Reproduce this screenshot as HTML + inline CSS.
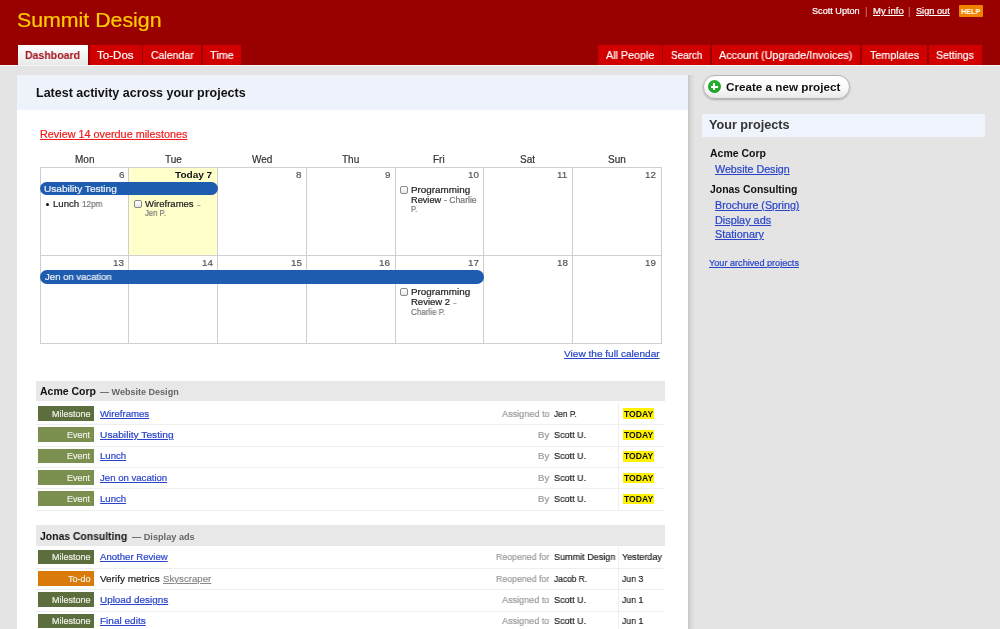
<!DOCTYPE html>
<html><head><meta charset="utf-8"><title>Summit Design - Dashboard</title>
<style>
html,body{margin:0;padding:0;}
body{width:1000px;height:629px;overflow:hidden;position:relative;background:#e4e4e4;font-family:"Liberation Sans",sans-serif;}
.r{position:absolute;}
.t{position:absolute;white-space:pre;will-change:transform;}
.n{-webkit-text-stroke:0.2px currentColor;}
</style></head><body>
<div class=r style="left:0;top:0;width:1000px;height:65px;background:#990000"></div>
<div class=r style="left:0;top:65px;width:1000px;height:1px;background:#f4f6f6"></div>
<div class=r style="left:958.5px;top:5px;width:24px;height:12px;background:#ee8400;border-radius:1px"></div>
<div class=r style="left:17.9px;top:45px;width:70.19999999999999px;height:20px;background:linear-gradient(#ffffff,#e9e9e9)"></div>
<div class=r style="left:90px;top:45px;width:51.5px;height:20px;background:#d10000"></div>
<div class=r style="left:143px;top:45px;width:58px;height:20px;background:#d10000"></div>
<div class=r style="left:202.7px;top:45px;width:38.30000000000001px;height:20px;background:#d10000"></div>
<div class=r style="left:598.4px;top:45px;width:63.200000000000045px;height:20px;background:#d10000"></div>
<div class=r style="left:663px;top:45px;width:47px;height:20px;background:#d10000"></div>
<div class=r style="left:712px;top:45px;width:148.39999999999998px;height:20px;background:#d10000"></div>
<div class=r style="left:862px;top:45px;width:65.39999999999998px;height:20px;background:#d10000"></div>
<div class=r style="left:929px;top:45px;width:53px;height:20px;background:#d10000"></div>
<div class=r style="left:17px;top:75px;width:671px;height:560px;background:#fff"></div>
<div class=r style="left:688px;top:75px;width:8px;height:560px;background:linear-gradient(90deg,#c6c6c6,#dadada 40%,#e5e5e5)"></div>
<div class=r style="left:17px;top:75px;width:671px;height:34.5px;background:#eef3fb"></div>
<div class=r style="left:129px;top:167px;width:88px;height:88px;background:#ffffcc"></div>
<div class=r style="left:40px;top:167px;width:1px;height:177px;background:#cfcfcf"></div>
<div class=r style="left:128px;top:167px;width:1px;height:177px;background:#cfcfcf"></div>
<div class=r style="left:217px;top:167px;width:1px;height:177px;background:#cfcfcf"></div>
<div class=r style="left:306px;top:167px;width:1px;height:177px;background:#cfcfcf"></div>
<div class=r style="left:395px;top:167px;width:1px;height:177px;background:#cfcfcf"></div>
<div class=r style="left:483px;top:167px;width:1px;height:177px;background:#cfcfcf"></div>
<div class=r style="left:572px;top:167px;width:1px;height:177px;background:#cfcfcf"></div>
<div class=r style="left:661px;top:167px;width:1px;height:177px;background:#cfcfcf"></div>
<div class=r style="left:40px;top:167px;width:622px;height:1px;background:#cfcfcf"></div>
<div class=r style="left:40px;top:255px;width:622px;height:1px;background:#cfcfcf"></div>
<div class=r style="left:40px;top:343px;width:622px;height:1px;background:#cfcfcf"></div>
<div class=r style="left:40px;top:182px;width:177.5px;height:13.2px;background:#1d5cae;border-radius:7px"></div>
<div class=r style="left:40px;top:270.4px;width:443.5px;height:13.2px;background:#1d5cae;border-radius:7px"></div>
<div class=r style="left:45.7px;top:202.8px;width:3.2px;height:3.2px;background:#111;border-radius:50%"></div>
<div class=r style="left:133.5px;top:199.5px;width:6px;height:6px;border:1px solid #8a8a8a;border-radius:2px;background:linear-gradient(#fff,#e6e6e6)"></div>
<div class=r style="left:400px;top:185.5px;width:6px;height:6px;border:1px solid #8a8a8a;border-radius:2px;background:linear-gradient(#fff,#e6e6e6)"></div>
<div class=r style="left:400px;top:288px;width:6px;height:6px;border:1px solid #8a8a8a;border-radius:2px;background:linear-gradient(#fff,#e6e6e6)"></div>
<div class=r style="left:36px;top:381px;width:629px;height:20.4px;background:#e8e8e8"></div>
<div class=r style="left:38px;top:406.0px;width:56px;height:14.6px;background:#5d6e3e"></div>
<div class=r style="left:618px;top:403.0px;width:1px;height:21.4px;background:#efefef"></div>
<div class=r style="left:36px;top:424.2px;width:628px;height:1px;background:#eeeeee"></div>
<div class=r style="left:623px;top:408.4px;width:31.4px;height:10.6px;background:#fff200"></div>
<div class=r style="left:38px;top:427.37px;width:56px;height:14.6px;background:#7b8f4f"></div>
<div class=r style="left:618px;top:424.37px;width:1px;height:21.4px;background:#efefef"></div>
<div class=r style="left:36px;top:445.57px;width:628px;height:1px;background:#eeeeee"></div>
<div class=r style="left:623px;top:429.77px;width:31.4px;height:10.6px;background:#fff200"></div>
<div class=r style="left:38px;top:448.74px;width:56px;height:14.6px;background:#7b8f4f"></div>
<div class=r style="left:618px;top:445.74px;width:1px;height:21.4px;background:#efefef"></div>
<div class=r style="left:36px;top:466.94px;width:628px;height:1px;background:#eeeeee"></div>
<div class=r style="left:623px;top:451.14px;width:31.4px;height:10.6px;background:#fff200"></div>
<div class=r style="left:38px;top:470.11px;width:56px;height:14.6px;background:#7b8f4f"></div>
<div class=r style="left:618px;top:467.11px;width:1px;height:21.4px;background:#efefef"></div>
<div class=r style="left:36px;top:488.31px;width:628px;height:1px;background:#eeeeee"></div>
<div class=r style="left:623px;top:472.51px;width:31.4px;height:10.6px;background:#fff200"></div>
<div class=r style="left:38px;top:491.48px;width:56px;height:14.6px;background:#7b8f4f"></div>
<div class=r style="left:618px;top:488.48px;width:1px;height:21.4px;background:#efefef"></div>
<div class=r style="left:36px;top:509.68px;width:628px;height:1px;background:#eeeeee"></div>
<div class=r style="left:623px;top:493.88px;width:31.4px;height:10.6px;background:#fff200"></div>
<div class=r style="left:36px;top:525.2px;width:629px;height:20.4px;background:#e8e8e8"></div>
<div class=r style="left:38px;top:549.6px;width:56px;height:14.6px;background:#5d6e3e"></div>
<div class=r style="left:618px;top:546.6px;width:1px;height:21.4px;background:#efefef"></div>
<div class=r style="left:36px;top:567.8000000000001px;width:628px;height:1px;background:#eeeeee"></div>
<div class=r style="left:38px;top:571.0px;width:56px;height:14.6px;background:#d97a0b"></div>
<div class=r style="left:618px;top:568.0px;width:1px;height:21.4px;background:#efefef"></div>
<div class=r style="left:36px;top:589.2px;width:628px;height:1px;background:#eeeeee"></div>
<div class=r style="left:38px;top:592.4px;width:56px;height:14.6px;background:#5d6e3e"></div>
<div class=r style="left:618px;top:589.4px;width:1px;height:21.4px;background:#efefef"></div>
<div class=r style="left:36px;top:610.6px;width:628px;height:1px;background:#eeeeee"></div>
<div class=r style="left:38px;top:613.8px;width:56px;height:14.6px;background:#5d6e3e"></div>
<div class=r style="left:618px;top:610.8px;width:1px;height:21.4px;background:#efefef"></div>
<div class=r style="left:36px;top:632.0px;width:628px;height:1px;background:#eeeeee"></div>
<div class=r style="left:703px;top:75.2px;width:145.2px;height:21.6px;border:1px solid #b4b4b4;border-radius:12px;background:linear-gradient(#ffffff 0%,#fbfbfb 50%,#e9e9e9 100%);box-shadow:0 1px 2px rgba(0,0,0,0.25)"></div>
<div class=r style="left:707.6px;top:80.3px;width:13.2px;height:13.2px;border-radius:50%;background:radial-gradient(circle at 50% 40%,#22b02c 40%,#0f8c1c)"></div>
<div class=r style="left:710.8px;top:86.1px;width:7px;height:1.7px;background:#fff"></div>
<div class=r style="left:713.45px;top:83.45px;width:1.7px;height:7px;background:#fff"></div>
<div class=r style="left:701.7px;top:113.5px;width:283px;height:23.2px;background:#eef3fc"></div>
<div class='t n' style="left:16.65px;top:11.00px;font-size:19.80px;line-height:19.80px;font-weight:400;color:#ffcc00;transform:scaleX(1.0779);transform-origin:0 0;">Summit Design</div>
<div class='t n' style="left:811.65px;top:7.00px;font-size:8.80px;line-height:8.80px;font-weight:400;color:#fff;transform:scaleX(1.0374);transform-origin:0 0;">Scott Upton</div>
<div class='t n' style="left:865.15px;top:6.50px;font-size:10.00px;line-height:10.00px;font-weight:400;color:#c86464;transform:scaleX(1.0391);transform-origin:0 0;">|</div>
<div class='t n' style="left:872.65px;top:7.00px;font-size:8.80px;line-height:8.80px;font-weight:400;color:#fff;transform:scaleX(1.0823);transform-origin:0 0;text-decoration:underline">My info</div>
<div class='t n' style="left:908.15px;top:6.50px;font-size:10.00px;line-height:10.00px;font-weight:400;color:#c86464;transform:scaleX(1.0391);transform-origin:0 0;">|</div>
<div class='t n' style="left:915.65px;top:7.00px;font-size:8.80px;line-height:8.80px;font-weight:400;color:#fff;transform:scaleX(1.0436);transform-origin:0 0;text-decoration:underline">Sign out</div>
<div class='t' style="left:960.65px;top:7.70px;font-size:8.00px;line-height:8.00px;font-weight:700;color:#fff;transform:scaleX(0.9046);transform-origin:0 0;">HELP</div>
<div class='t' style="left:25.25px;top:49.70px;font-size:11.20px;line-height:11.20px;font-weight:700;color:#a0101c;transform:scaleX(0.9419);transform-origin:0 0;">Dashboard</div>
<div class='t n' style="left:97.25px;top:50.00px;font-size:11.20px;line-height:11.20px;font-weight:400;color:#fff;transform:scaleX(1.0345);transform-origin:0 0;">To-Dos</div>
<div class='t n' style="left:150.65px;top:50.00px;font-size:11.20px;line-height:11.20px;font-weight:400;color:#fff;transform:scaleX(0.9395);transform-origin:0 0;">Calendar</div>
<div class='t n' style="left:209.65px;top:50.00px;font-size:11.20px;line-height:11.20px;font-weight:400;color:#fff;transform:scaleX(0.9684);transform-origin:0 0;">Time</div>
<div class='t n' style="left:605.65px;top:50.00px;font-size:11.20px;line-height:11.20px;font-weight:400;color:#fff;transform:scaleX(0.9577);transform-origin:0 0;">All People</div>
<div class='t n' style="left:670.65px;top:50.00px;font-size:11.20px;line-height:11.20px;font-weight:400;color:#fff;transform:scaleX(0.8820);transform-origin:0 0;">Search</div>
<div class='t n' style="left:719.25px;top:50.00px;font-size:11.20px;line-height:11.20px;font-weight:400;color:#fff;transform:scaleX(0.9660);transform-origin:0 0;">Account (Upgrade/Invoices)</div>
<div class='t n' style="left:869.65px;top:50.00px;font-size:11.20px;line-height:11.20px;font-weight:400;color:#fff;transform:scaleX(0.9619);transform-origin:0 0;">Templates</div>
<div class='t n' style="left:936.05px;top:50.00px;font-size:11.20px;line-height:11.20px;font-weight:400;color:#fff;transform:scaleX(0.9365);transform-origin:0 0;">Settings</div>
<div class='t' style="left:36.45px;top:87.00px;font-size:12.20px;line-height:12.20px;font-weight:700;color:#111;transform:scaleX(1.0250);transform-origin:0 0;">Latest activity across your projects</div>
<div class='t n' style="left:40.15px;top:128.80px;font-size:10.60px;line-height:10.60px;font-weight:400;color:#ee1c1c;transform:scaleX(1.0218);transform-origin:0 0;text-decoration:underline">Review 14 overdue milestones</div>
<div class='t n' style="left:74.62px;top:154.70px;font-size:10.00px;line-height:10.00px;font-weight:400;color:#333;">Mon</div>
<div class='t n' style="left:164.62px;top:154.70px;font-size:10.00px;line-height:10.00px;font-weight:400;color:#333;">Tue</div>
<div class='t n' style="left:251.56px;top:154.70px;font-size:10.00px;line-height:10.00px;font-weight:400;color:#333;">Wed</div>
<div class='t n' style="left:341.83px;top:154.70px;font-size:10.00px;line-height:10.00px;font-weight:400;color:#333;">Thu</div>
<div class='t n' style="left:433.32px;top:154.70px;font-size:10.00px;line-height:10.00px;font-weight:400;color:#333;">Fri</div>
<div class='t n' style="left:520.34px;top:154.70px;font-size:10.00px;line-height:10.00px;font-weight:400;color:#333;">Sat</div>
<div class='t n' style="left:607.65px;top:154.70px;font-size:10.00px;line-height:10.00px;font-weight:400;color:#333;">Sun</div>
<div class='t n' style="left:118.55px;top:170.20px;font-size:9.80px;line-height:9.80px;font-weight:400;color:#555;">6</div>
<div class='t n' style="left:113.10px;top:258.20px;font-size:9.80px;line-height:9.80px;font-weight:400;color:#555;">13</div>
<div class='t n' style="left:201.80px;top:258.20px;font-size:9.80px;line-height:9.80px;font-weight:400;color:#555;">14</div>
<div class='t n' style="left:295.95px;top:170.20px;font-size:9.80px;line-height:9.80px;font-weight:400;color:#555;">8</div>
<div class='t n' style="left:290.50px;top:258.20px;font-size:9.80px;line-height:9.80px;font-weight:400;color:#555;">15</div>
<div class='t n' style="left:384.65px;top:170.20px;font-size:9.80px;line-height:9.80px;font-weight:400;color:#555;">9</div>
<div class='t n' style="left:379.20px;top:258.20px;font-size:9.80px;line-height:9.80px;font-weight:400;color:#555;">16</div>
<div class='t n' style="left:467.90px;top:170.20px;font-size:9.80px;line-height:9.80px;font-weight:400;color:#555;">10</div>
<div class='t n' style="left:467.90px;top:258.20px;font-size:9.80px;line-height:9.80px;font-weight:400;color:#555;">17</div>
<div class='t n' style="left:557.33px;top:170.20px;font-size:9.80px;line-height:9.80px;font-weight:400;color:#555;">11</div>
<div class='t n' style="left:556.60px;top:258.20px;font-size:9.80px;line-height:9.80px;font-weight:400;color:#555;">18</div>
<div class='t n' style="left:645.30px;top:170.20px;font-size:9.80px;line-height:9.80px;font-weight:400;color:#555;">12</div>
<div class='t n' style="left:645.30px;top:258.20px;font-size:9.80px;line-height:9.80px;font-weight:400;color:#555;">19</div>
<div class='t' style="left:175.15px;top:170.20px;font-size:9.50px;line-height:9.50px;font-weight:700;color:#111;transform:scaleX(1.0570);transform-origin:0 0;">Today 7</div>
<div class='t n' style="left:44.45px;top:184.40px;font-size:9.60px;line-height:9.60px;font-weight:400;color:#eef2f8;transform:scaleX(1.0537);transform-origin:0 0;">Usability Testing</div>
<div class='t n' style="left:44.65px;top:272.40px;font-size:9.60px;line-height:9.60px;font-weight:400;color:#eef2f8;transform:scaleX(0.9919);transform-origin:0 0;">Jen on vacation</div>
<div class='t n' style="left:52.95px;top:199.50px;font-size:9.20px;line-height:9.20px;font-weight:400;color:#222;transform:scaleX(1.0452);transform-origin:0 0;">Lunch</div>
<div class='t n' style="left:81.95px;top:199.50px;font-size:8.30px;line-height:8.30px;font-weight:400;color:#777;transform:scaleX(0.9825);transform-origin:0 0;">12pm</div>
<div class='t n' style="left:144.65px;top:199.50px;font-size:9.20px;line-height:9.20px;font-weight:400;color:#222;transform:scaleX(1.0356);transform-origin:0 0;">Wireframes</div>
<div class='t n' style="left:196.65px;top:200.50px;font-size:8.00px;line-height:8.00px;font-weight:400;color:#999;transform:scaleX(1.3884);transform-origin:0 0;">-</div>
<div class='t n' style="left:144.65px;top:210.00px;font-size:8.20px;line-height:8.20px;font-weight:400;color:#777;transform:scaleX(0.9329);transform-origin:0 0;">Jen P.</div>
<div class='t n' style="left:411.15px;top:185.50px;font-size:9.20px;line-height:9.20px;font-weight:400;color:#222;transform:scaleX(1.0721);transform-origin:0 0;">Programming</div>
<div class='t n' style="left:411.15px;top:196.00px;font-size:9.20px;line-height:9.20px;font-weight:400;color:#222;transform:scaleX(1.0011);transform-origin:0 0;">Review</div>
<div class='t n' style="left:443.65px;top:196.80px;font-size:8.20px;line-height:8.20px;font-weight:400;color:#777;transform:scaleX(1.0553);transform-origin:0 0;">- Charlie</div>
<div class='t n' style="left:411.15px;top:205.80px;font-size:8.20px;line-height:8.20px;font-weight:400;color:#777;transform:scaleX(0.9267);transform-origin:0 0;">P.</div>
<div class='t n' style="left:411.15px;top:288.00px;font-size:9.20px;line-height:9.20px;font-weight:400;color:#222;transform:scaleX(1.0721);transform-origin:0 0;">Programming</div>
<div class='t n' style="left:411.15px;top:298.30px;font-size:9.20px;line-height:9.20px;font-weight:400;color:#222;transform:scaleX(1.0360);transform-origin:0 0;">Review 2</div>
<div class='t n' style="left:452.65px;top:299.30px;font-size:8.00px;line-height:8.00px;font-weight:400;color:#999;transform:scaleX(1.3884);transform-origin:0 0;">-</div>
<div class='t n' style="left:411.15px;top:308.50px;font-size:8.20px;line-height:8.20px;font-weight:400;color:#777;transform:scaleX(0.9787);transform-origin:0 0;">Charlie P.</div>
<div class='t n' style="left:564.45px;top:349.00px;font-size:9.40px;line-height:9.40px;font-weight:400;color:#2944c9;transform:scaleX(1.0753);transform-origin:0 0;text-decoration:underline">View the full calendar</div>
<div class='t' style="left:40.15px;top:386.40px;font-size:10.50px;line-height:10.50px;font-weight:700;color:#111;transform:scaleX(0.9944);transform-origin:0 0;">Acme Corp</div>
<div class='t' style="left:99.65px;top:388.40px;font-size:8.80px;line-height:8.80px;font-weight:700;color:#666;transform:scaleX(1.0273);transform-origin:0 0;">— Website Design</div>
<div class='t n' style="left:51.88px;top:409.50px;font-size:9.00px;line-height:9.00px;font-weight:400;color:#eef0e6;">Milestone</div>
<div class='t n' style="left:99.65px;top:408.50px;font-size:9.60px;line-height:9.60px;font-weight:400;color:#2944c9;transform:scaleX(1.0027);transform-origin:0 0;text-decoration:underline">Wireframes</div>
<div class='t n' style="left:502.05px;top:408.50px;font-size:9.60px;line-height:9.60px;font-weight:400;color:#999;transform:scaleX(0.9488);transform-origin:0 0;">Assigned to</div>
<div class='t n' style="left:554.25px;top:408.50px;font-size:9.60px;line-height:9.60px;font-weight:400;color:#222;transform:scaleX(0.8661);transform-origin:0 0;">Jen P.</div>
<div class='t' style="left:624.15px;top:409.50px;font-size:8.40px;line-height:8.40px;font-weight:700;color:#111;transform:scaleX(1.0254);transform-origin:0 0;">TODAY</div>
<div class='t n' style="left:67.39px;top:430.87px;font-size:9.00px;line-height:9.00px;font-weight:400;color:#eef0e6;">Event</div>
<div class='t n' style="left:99.65px;top:429.87px;font-size:9.60px;line-height:9.60px;font-weight:400;color:#2944c9;transform:scaleX(1.0652);transform-origin:0 0;text-decoration:underline">Usability Testing</div>
<div class='t n' style="left:538.10px;top:429.87px;font-size:9.60px;line-height:9.60px;font-weight:400;color:#999;">By</div>
<div class='t n' style="left:554.25px;top:429.87px;font-size:9.60px;line-height:9.60px;font-weight:400;color:#222;transform:scaleX(0.9401);transform-origin:0 0;">Scott U.</div>
<div class='t' style="left:624.15px;top:430.87px;font-size:8.40px;line-height:8.40px;font-weight:700;color:#111;transform:scaleX(1.0254);transform-origin:0 0;">TODAY</div>
<div class='t n' style="left:67.39px;top:452.24px;font-size:9.00px;line-height:9.00px;font-weight:400;color:#eef0e6;">Event</div>
<div class='t n' style="left:99.65px;top:451.24px;font-size:9.60px;line-height:9.60px;font-weight:400;color:#2944c9;transform:scaleX(0.9978);transform-origin:0 0;text-decoration:underline">Lunch</div>
<div class='t n' style="left:538.10px;top:451.24px;font-size:9.60px;line-height:9.60px;font-weight:400;color:#999;">By</div>
<div class='t n' style="left:554.25px;top:451.24px;font-size:9.60px;line-height:9.60px;font-weight:400;color:#222;transform:scaleX(0.9401);transform-origin:0 0;">Scott U.</div>
<div class='t' style="left:624.15px;top:452.24px;font-size:8.40px;line-height:8.40px;font-weight:700;color:#111;transform:scaleX(1.0254);transform-origin:0 0;">TODAY</div>
<div class='t n' style="left:67.39px;top:473.61px;font-size:9.00px;line-height:9.00px;font-weight:400;color:#eef0e6;">Event</div>
<div class='t n' style="left:99.65px;top:472.61px;font-size:9.60px;line-height:9.60px;font-weight:400;color:#2944c9;transform:scaleX(0.9993);transform-origin:0 0;text-decoration:underline">Jen on vacation</div>
<div class='t n' style="left:538.10px;top:472.61px;font-size:9.60px;line-height:9.60px;font-weight:400;color:#999;">By</div>
<div class='t n' style="left:554.25px;top:472.61px;font-size:9.60px;line-height:9.60px;font-weight:400;color:#222;transform:scaleX(0.9401);transform-origin:0 0;">Scott U.</div>
<div class='t' style="left:624.15px;top:473.61px;font-size:8.40px;line-height:8.40px;font-weight:700;color:#111;transform:scaleX(1.0254);transform-origin:0 0;">TODAY</div>
<div class='t n' style="left:67.39px;top:494.98px;font-size:9.00px;line-height:9.00px;font-weight:400;color:#eef0e6;">Event</div>
<div class='t n' style="left:99.65px;top:493.98px;font-size:9.60px;line-height:9.60px;font-weight:400;color:#2944c9;transform:scaleX(0.9978);transform-origin:0 0;text-decoration:underline">Lunch</div>
<div class='t n' style="left:538.10px;top:493.98px;font-size:9.60px;line-height:9.60px;font-weight:400;color:#999;">By</div>
<div class='t n' style="left:554.25px;top:493.98px;font-size:9.60px;line-height:9.60px;font-weight:400;color:#222;transform:scaleX(0.9401);transform-origin:0 0;">Scott U.</div>
<div class='t' style="left:624.15px;top:494.98px;font-size:8.40px;line-height:8.40px;font-weight:700;color:#111;transform:scaleX(1.0254);transform-origin:0 0;">TODAY</div>
<div class='t' style="left:40.15px;top:530.60px;font-size:10.50px;line-height:10.50px;font-weight:700;color:#111;transform:scaleX(0.9899);transform-origin:0 0;">Jonas Consulting</div>
<div class='t' style="left:131.65px;top:532.60px;font-size:8.80px;line-height:8.80px;font-weight:700;color:#666;transform:scaleX(1.0423);transform-origin:0 0;">— Display ads</div>
<div class='t n' style="left:51.88px;top:553.10px;font-size:9.00px;line-height:9.00px;font-weight:400;color:#eef0e6;">Milestone</div>
<div class='t n' style="left:99.65px;top:552.10px;font-size:9.60px;line-height:9.60px;font-weight:400;color:#2944c9;transform:scaleX(0.9990);transform-origin:0 0;text-decoration:underline">Another Review</div>
<div class='t n' style="left:496.35px;top:552.10px;font-size:9.60px;line-height:9.60px;font-weight:400;color:#999;transform:scaleX(0.9162);transform-origin:0 0;">Reopened for</div>
<div class='t n' style="left:554.25px;top:552.10px;font-size:9.60px;line-height:9.60px;font-weight:400;color:#222;transform:scaleX(0.9434);transform-origin:0 0;">Summit Design</div>
<div class='t n' style="left:622.45px;top:552.10px;font-size:9.60px;line-height:9.60px;font-weight:400;color:#222;transform:scaleX(0.9423);transform-origin:0 0;">Yesterday</div>
<div class='t n' style="left:67.89px;top:574.50px;font-size:9.00px;line-height:9.00px;font-weight:400;color:#eef0e6;">To-do</div>
<div class='t n' style="left:99.65px;top:573.50px;font-size:9.60px;line-height:9.60px;font-weight:400;color:#222;transform:scaleX(1.0363);transform-origin:0 0;">Verify metrics</div>
<div class='t n' style="left:162.55px;top:573.50px;font-size:9.60px;line-height:9.60px;font-weight:400;color:#888;transform:scaleX(1.0059);transform-origin:0 0;text-decoration:underline">Skyscraper</div>
<div class='t n' style="left:496.35px;top:573.50px;font-size:9.60px;line-height:9.60px;font-weight:400;color:#999;transform:scaleX(0.9162);transform-origin:0 0;">Reopened for</div>
<div class='t n' style="left:554.25px;top:573.50px;font-size:9.60px;line-height:9.60px;font-weight:400;color:#222;transform:scaleX(0.8737);transform-origin:0 0;">Jacob R.</div>
<div class='t n' style="left:622.45px;top:573.50px;font-size:9.60px;line-height:9.60px;font-weight:400;color:#222;transform:scaleX(0.9027);transform-origin:0 0;">Jun 3</div>
<div class='t n' style="left:51.88px;top:595.90px;font-size:9.00px;line-height:9.00px;font-weight:400;color:#eef0e6;">Milestone</div>
<div class='t n' style="left:99.65px;top:594.90px;font-size:9.60px;line-height:9.60px;font-weight:400;color:#2944c9;transform:scaleX(1.0305);transform-origin:0 0;text-decoration:underline">Upload designs</div>
<div class='t n' style="left:502.35px;top:594.90px;font-size:9.60px;line-height:9.60px;font-weight:400;color:#999;transform:scaleX(0.9429);transform-origin:0 0;">Assigned to</div>
<div class='t n' style="left:554.25px;top:594.90px;font-size:9.60px;line-height:9.60px;font-weight:400;color:#222;transform:scaleX(0.9401);transform-origin:0 0;">Scott U.</div>
<div class='t n' style="left:622.45px;top:594.90px;font-size:9.60px;line-height:9.60px;font-weight:400;color:#222;transform:scaleX(0.9027);transform-origin:0 0;">Jun 1</div>
<div class='t n' style="left:51.88px;top:617.30px;font-size:9.00px;line-height:9.00px;font-weight:400;color:#eef0e6;">Milestone</div>
<div class='t n' style="left:99.65px;top:616.30px;font-size:9.60px;line-height:9.60px;font-weight:400;color:#2944c9;transform:scaleX(1.0445);transform-origin:0 0;text-decoration:underline">Final edits</div>
<div class='t n' style="left:502.35px;top:616.30px;font-size:9.60px;line-height:9.60px;font-weight:400;color:#999;transform:scaleX(0.9429);transform-origin:0 0;">Assigned to</div>
<div class='t n' style="left:554.25px;top:616.30px;font-size:9.60px;line-height:9.60px;font-weight:400;color:#222;transform:scaleX(0.9401);transform-origin:0 0;">Scott U.</div>
<div class='t n' style="left:622.45px;top:616.30px;font-size:9.60px;line-height:9.60px;font-weight:400;color:#222;transform:scaleX(0.9027);transform-origin:0 0;">Jun 1</div>
<div class='t' style="left:726.45px;top:81.50px;font-size:10.80px;line-height:10.80px;font-weight:700;color:#111;transform:scaleX(1.0820);transform-origin:0 0;">Create a new project</div>
<div class='t' style="left:708.65px;top:119.40px;font-size:12.30px;line-height:12.30px;font-weight:700;color:#333;transform:scaleX(1.0272);transform-origin:0 0;">Your projects</div>
<div class='t' style="left:709.95px;top:148.50px;font-size:10.30px;line-height:10.30px;font-weight:700;color:#111;transform:scaleX(1.0174);transform-origin:0 0;">Acme Corp</div>
<div class='t n' style="left:714.65px;top:164.60px;font-size:10.00px;line-height:10.00px;font-weight:400;color:#2944c9;transform:scaleX(1.0694);transform-origin:0 0;text-decoration:underline">Website Design</div>
<div class='t' style="left:709.95px;top:184.60px;font-size:10.30px;line-height:10.30px;font-weight:700;color:#111;transform:scaleX(1.0115);transform-origin:0 0;">Jonas Consulting</div>
<div class='t n' style="left:714.65px;top:200.70px;font-size:10.00px;line-height:10.00px;font-weight:400;color:#2944c9;transform:scaleX(1.0694);transform-origin:0 0;text-decoration:underline">Brochure (Spring)</div>
<div class='t n' style="left:714.65px;top:215.70px;font-size:10.00px;line-height:10.00px;font-weight:400;color:#2944c9;transform:scaleX(1.0853);transform-origin:0 0;text-decoration:underline">Display ads</div>
<div class='t n' style="left:714.65px;top:230.30px;font-size:10.00px;line-height:10.00px;font-weight:400;color:#2944c9;transform:scaleX(1.0883);transform-origin:0 0;text-decoration:underline">Stationary</div>
<div class='t n' style="left:709.15px;top:259.00px;font-size:8.90px;line-height:8.90px;font-weight:400;color:#2944c9;transform:scaleX(1.0281);transform-origin:0 0;text-decoration:underline">Your archived projects</div>

</body></html>
